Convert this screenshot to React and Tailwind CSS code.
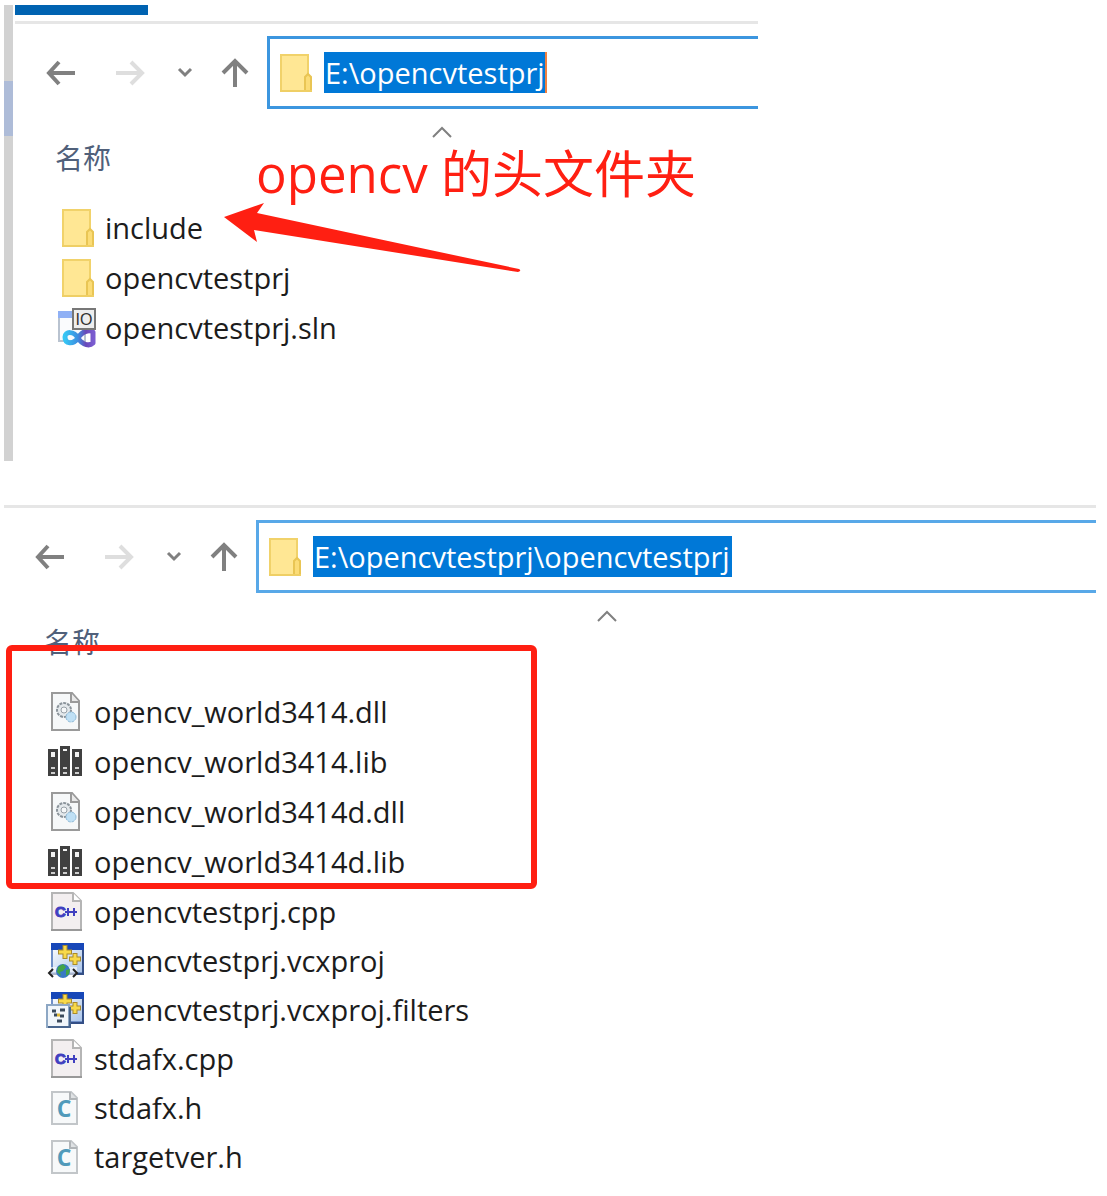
const FolderIcon = () => (
  <svg viewBox="0 0 40 40" className="h-10 w-10" aria-hidden="true">
    <rect x="6" y="2" width="27" height="36" fill="#ffe794" stroke="#f1d26a" strokeWidth="2" />
    <path d="M30 38V24l3-3 3 3v14z" fill="#fbdc77" stroke="#e9c554" strokeWidth="2" />
    <path d="M5 38h32" stroke="#efcf65" strokeWidth="2" />
  </svg>
)

const SolutionIcon = () => (
  <svg viewBox="0 0 40 40" className="h-10 w-10" aria-hidden="true">
    <defs>
      <linearGradient id="loop" x1="0" x2="1">
        <stop offset="0" stopColor="#36c5f4" />
        <stop offset="0.45" stopColor="#3d8fe0" />
        <stop offset="0.75" stopColor="#6a48b8" />
        <stop offset="1" stopColor="#7a5cd0" />
      </linearGradient>
    </defs>
    <rect x="2" y="4" width="26" height="29" fill="#fafbfd" stroke="#b9c3d0" strokeWidth="2" />
    <rect x="1" y="3" width="20" height="7" fill="#8fb0f5" />
    <path
      d="M21 30C17 23 8 23 8 29c0 7 8 8 13 1 5-8 12-8 15-6v11c-3 3-10 3-15-5z"
      fill="none"
      stroke="url(#loop)"
      strokeWidth="5"
      strokeLinejoin="round"
    />
    <rect x="16" y="1" width="22" height="20" fill="#eeeeee" stroke="#777777" strokeWidth="2" />
    <text x="27" y="17" textAnchor="middle" fontSize="16" fontFamily="Liberation Sans, sans-serif" fill="#333333">IO</text>
  </svg>
)

const DllIcon = () => (
  <svg viewBox="0 0 40 40" className="h-10 w-10" aria-hidden="true">
    <path d="M6 1h20l7 8v29H6z" fill="#f6f8f9" stroke="#9a9a9a" strokeWidth="2" />
    <path d="M25 1v9h8" fill="#e9e9e9" stroke="#9a9a9a" strokeWidth="2" />
    <circle cx="18" cy="18" r="7" fill="#e4e9ec" stroke="#8b949b" strokeWidth="2" strokeDasharray="3 1" />
    <circle cx="18" cy="18" r="3" fill="#f6f8f9" stroke="#98a1a8" strokeWidth="1" />
    <circle cx="25" cy="25" r="5" fill="#bfe0f5" stroke="#8db9d6" strokeWidth="1" strokeDasharray="3 1" />
  </svg>
)

const LibIcon = () => (
  <svg viewBox="0 0 40 40" className="h-10 w-10" aria-hidden="true">
    <g fill="#404040">
      <rect x="2" y="7" width="10" height="27" />
      <rect x="14" y="4" width="10" height="30" />
      <rect x="26" y="7" width="10" height="27" />
    </g>
    <g fill="#f2f2f2">
      <rect x="5" y="10" width="4" height="5" />
      <rect x="17" y="7" width="4" height="2" />
      <rect x="29" y="10" width="4" height="5" />
    </g>
    <path d="M5 26h4M5 31h4M17 26h4M17 31h4M29 26h4M29 31h4" stroke="#cfcfcf" strokeWidth="2" />
  </svg>
)

const CppIcon = () => (
  <svg viewBox="0 0 40 40" className="h-10 w-10" aria-hidden="true">
    <path d="M6 1h21l8 8v29H6z" fill="#f3eff0" stroke="#b5b5b5" strokeWidth="2" />
    <path d="M5 38h31" stroke="#999999" strokeWidth="2" />
    <path d="M27 1v8h8" fill="#ffffff" stroke="#b5b5b5" strokeWidth="2" />
    <text x="9" y="25" fontSize="15" fontWeight="bold" fontFamily="Liberation Sans, sans-serif" fill="#4040c0" stroke="#4040c0">C</text>
    <path d="M19 20h12M22 16v8M28 16v8" stroke="#4040c0" strokeWidth="2" />
  </svg>
)

const HeaderIcon = () => (
  <svg viewBox="0 0 40 40" className="h-10 w-10" aria-hidden="true">
    <path d="M6 4h19l6 6v26H6z" fill="#f7f9fa" stroke="#c2c6c9" strokeWidth="2" />
    <path d="M24 4v7h7" fill="#dfe2e4" stroke="#b1b5b8" strokeWidth="2" />
    <text x="18" y="29" textAnchor="middle" fontSize="23" fontWeight="bold" fontFamily="Open Sans, sans-serif" fill="#519aba">C</text>
  </svg>
)

const WindowBase = () => (
  <>
    <defs>
      <linearGradient id="pane" x1="0" y1="0" x2="1" y2="1">
        <stop offset="0" stopColor="#ffffff" />
        <stop offset="1" stopColor="#a9c4ea" />
      </linearGradient>
    </defs>
    <rect x="6" y="3" width="31" height="29" fill="url(#pane)" stroke="#6f8fc8" strokeWidth="2" />
    <path d="M5 33h33M37 8v25" stroke="#344f86" strokeWidth="2" />
    <rect x="5" y="2" width="33" height="7" fill="#1747b8" />
    <path d="M19 4v14M12 11h14M29 12v12M23 18h12" stroke="#a98a2c" strokeWidth="5" />
    <path d="M19 5v12M13 11h12M29 13v10M24 18h10" stroke="#f8d94a" strokeWidth="3" />
  </>
)

const ProjectIcon = () => (
  <svg viewBox="0 0 40 40" className="h-10 w-10" aria-hidden="true">
    <WindowBase />
    <path d="M3 26h28v12H3z" fill="#ffffff" fillOpacity="0.6" />
    <circle cx="17" cy="30" r="7" fill="#3979c4" />
    <path d="M12 26l5-3 3 3-3 4-3 1 1 4-4-4zM20 29l4-1-1 5-3 2z" fill="#43a548" />
    <path d="M7 28l-4 4 4 4M27 28l4 4-4 4" fill="none" stroke="#222222" strokeWidth="2" />
  </svg>
)

const FiltersIcon = () => (
  <svg viewBox="0 0 40 40" className="h-10 w-10" aria-hidden="true">
    <WindowBase />
    <rect x="1" y="15" width="22" height="22" fill="#f1f6fb" stroke="#8da7c4" strokeWidth="2" />
    <path d="M2 37h22V17" fill="none" stroke="#48658e" strokeWidth="2" />
    <path d="M6 21h4M14 20h5M8 25h3M14 26h4M11 31h5" stroke="#3a4a5c" strokeWidth="3" />
    <path d="M11 25h3" stroke="#e0b93a" strokeWidth="3" />
  </svg>
)

const icons = {
  folder: FolderIcon,
  sln: SolutionIcon,
  dll: DllIcon,
  lib: LibIcon,
  cpp: CppIcon,
  h: HeaderIcon,
  vcxproj: ProjectIcon,
  filters: FiltersIcon,
}

const rootFiles = [
  { name: 'include', type: 'folder' },
  { name: 'opencvtestprj', type: 'folder' },
  { name: 'opencvtestprj.sln', type: 'sln' },
]

const libraryFiles = [
  { name: 'opencv_world3414.dll', type: 'dll' },
  { name: 'opencv_world3414.lib', type: 'lib' },
  { name: 'opencv_world3414d.dll', type: 'dll' },
  { name: 'opencv_world3414d.lib', type: 'lib' },
]

const sourceFiles = [
  { name: 'opencvtestprj.cpp', type: 'cpp' },
  { name: 'opencvtestprj.vcxproj', type: 'vcxproj' },
  { name: 'opencvtestprj.vcxproj.filters', type: 'filters' },
  { name: 'stdafx.cpp', type: 'cpp' },
  { name: 'stdafx.h', type: 'h' },
  { name: 'targetver.h', type: 'h' },
]

const FileRow = ({ file, height }) => {
  const Icon = icons[file.type]
  return (
    <li className={`flex items-center gap-2 pl-[42px] ${height}`}>
      <Icon />
      <span className="whitespace-nowrap">{file.name}</span>
    </li>
  )
}

const Toolbar = ({ path, caret, border }) => (
  <div className="flex items-center border-t-3 border-[#e6e6e6] pt-3">
    <div className="flex w-[252px] shrink-0 items-center pl-[30px] text-[#808080]">
      <button type="button" aria-label="Back">
        <svg viewBox="0 0 30 30" className="h-[30px] w-[30px]" fill="none" stroke="currentColor" strokeWidth="4">
          <path d="M30 15H4M14 4L4 15l10 11" />
        </svg>
      </button>
      <button type="button" aria-label="Forward" className="ml-10 text-[#dedede]">
        <svg viewBox="0 0 30 30" className="h-[30px] w-[30px]" fill="none" stroke="currentColor" strokeWidth="4">
          <path d="M1 15h26M16 4l11 11-11 11" />
        </svg>
      </button>
      <button type="button" aria-label="Recent locations" className="ml-8">
        <svg viewBox="0 0 16 16" className="h-4 w-4" fill="none" stroke="currentColor" strokeWidth="3">
          <path d="M2 4l6 6 6-6" />
        </svg>
      </button>
      <button type="button" aria-label="Up" className="ml-7">
        <svg viewBox="0 0 28 30" className="h-[30px] w-7" fill="none" stroke="currentColor" strokeWidth="4">
          <path d="M14 29V3M2 15L14 3l12 12" />
        </svg>
      </button>
    </div>
    <label className={`flex min-w-0 grow items-center gap-[9px] border-3 border-r-0 py-[13px] pl-[5px] ${border}`}>
      <FolderIcon />
      <input
        type="text"
        aria-label="Address"
        readOnly
        value={path}
        className={`field-sizing-content h-[41px] bg-[#0078d7] pl-px text-white outline-none ${caret}`}
      />
    </label>
  </div>
)

const NameHeader = ({ indent }) => (
  <button type="button" className="block w-full pt-[17px] pb-[25px] text-left text-[28px] leading-10 text-[#50607a]">
    <svg viewBox="0 0 20 12" className={`h-3 w-5 ${indent}`} fill="none" stroke="#808080" strokeWidth="2">
      <path d="M1 11l9-9 9 9" />
    </svg>
    <span className="block pl-10">名称</span>
  </button>
)

const App = () => {
  return (
    <main className="min-h-screen bg-white pt-[5px] pr-[11px] pb-2 pl-1 font-['Open_Sans','Noto_Sans_CJK_SC',sans-serif] text-[29px] leading-10 text-[#1c1c1c]">
      <section className="flex max-w-[754px]">
        <div className="w-[9px] shrink-0 bg-[#d2d2d2] pt-[76px]">
          <div className="h-[55px] bg-[#aebcd8]" />
        </div>
        <div className="min-w-0 grow pb-[108px] pl-0.5">
          <div className="mb-1.5 h-[10px] w-[133px] bg-[#0063b1]" />
          <Toolbar path="E:\opencvtestprj" caret="border-r-2 border-[#f08040]" border="border-[#3c96df]" />
          <div className="relative">
            <NameHeader indent="ml-[417px]" />
            <ul>
              {rootFiles.map((file) => (
                <FileRow key={file.name} file={file} height="h-[50px]" />
              ))}
            </ul>
            {/* red note and arrow drawn over the list */}
            <p className="absolute top-7 left-[241px] text-[51px] leading-[72px] whitespace-nowrap text-[#ff1f12]">
              opencv 的头文件夹
            </p>
            <svg viewBox="0 0 300 70" className="absolute top-[94px] left-[208px] h-[70px] w-[300px]" aria-hidden="true">
              <path d="M1 14L41 0l-7 10 262 56q3 2-1 3L31 27l3 12z" fill="#ff1f12" />
            </svg>
          </div>
        </div>
      </section>

      <section className="mt-11">
        <Toolbar path="E:\opencvtestprj\opencvtestprj" caret="pr-0.5" border="border-[#58a8e8]" />
        <NameHeader indent="ml-[593px]" />
        <div className="relative">
          <ul>
            {libraryFiles.map((file) => (
              <FileRow key={file.name} file={file} height="h-[50px]" />
            ))}
          </ul>
          <div className="pointer-events-none absolute -top-[42px] -bottom-0.5 left-0.5 w-[531px] rounded-md border-6 border-[#ff1f12]" />
        </div>
        <ul>
          {sourceFiles.map((file) => (
            <FileRow key={file.name} file={file} height="h-[49px]" />
          ))}
        </ul>
      </section>
    </main>
  )
}

export default App
